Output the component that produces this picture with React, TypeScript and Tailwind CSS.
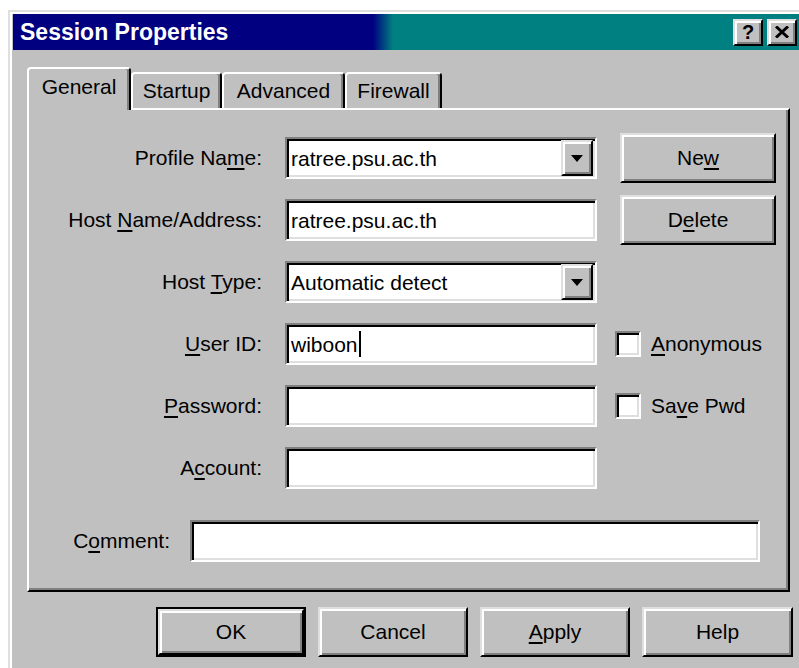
import React from 'react';

// Win9x-style "Session Properties" dialog, drawn at roughly 2x scale.

const raised =
  'border-2 border-t-[#dfdfdf] border-l-[#dfdfdf] border-r-black border-b-black shadow-[inset_2px_2px_0_#fff,inset_-2px_-2px_0_#808080]';
const sunken =
  'border-2 border-t-[#808080] border-l-[#808080] border-r-white border-b-white shadow-[inset_2px_2px_0_#000,inset_-2px_-2px_0_#dfdfdf]';

const Mn = ({ text, at }: { text: string; at: number }) => (
  <>
    {text.slice(0, at)}
    <span className="underline underline-offset-[3px] decoration-[1.5px]">{text[at]}</span>
    {text.slice(at + 1)}
  </>
);

const DropButton = () => (
  <div className={`${raised} bg-[#c0c0c0] w-[32px] h-[36px] flex items-center justify-center shrink-0`}>
    <svg width="12" height="7" viewBox="0 0 12 7">
      <path d="M0 0h12L6 7z" fill="#000" />
    </svg>
  </div>
);

const Field = ({
  value,
  caret,
  dropdown,
  className = 'w-[312px]',
}: {
  value?: string;
  caret?: boolean;
  dropdown?: boolean;
  className?: string;
}) => (
  <div className={`${sunken} ${className} h-[42px] bg-white flex items-center pl-[4px] pr-[2px] shrink-0`}>
    <span className="flex-1 whitespace-nowrap leading-none flex items-center">
      {value}
      {caret && <span className="inline-block w-[2px] h-[26px] bg-black ml-[1px]" />}
    </span>
    {dropdown && <DropButton />}
  </div>
);

const Button = ({ children, className = '' }: { children: React.ReactNode; className?: string }) => (
  <button className={`${raised} bg-[#c0c0c0] flex items-center justify-center text-black ${className}`}>
    {children}
  </button>
);

const Check = ({ children }: { children: React.ReactNode }) => (
  <div className="flex items-center gap-[10px]">
    <div className={`${sunken} w-[26px] h-[26px] bg-white`} />
    <span>{children}</span>
  </div>
);

const Row = ({
  label,
  children,
  side,
}: {
  label: React.ReactNode;
  children: React.ReactNode;
  side?: React.ReactNode;
}) => (
  <div className="flex items-center h-[42px]">
    <div className="w-[234px] text-right pr-[1px]">{label}</div>
    <div className="ml-[22px]">{children}</div>
    {side && <div className="ml-[18px]">{side}</div>}
  </div>
);

const Tab = ({ label, active, className }: { label: string; active?: boolean; className: string }) => (
  <div
    className={`border-t-2 border-l-2 border-white border-r-2 border-r-black shadow-[inset_-2px_0_0_#808080] rounded-t-[4px] bg-[#c0c0c0] flex items-center justify-center ${className} ${
      active ? 'h-[43px] -mb-[2px] z-10 relative pb-[6px]' : 'h-[36px]'
    }`}
  >
    {label}
  </div>
);

export default function App() {
  return (
    <div
      className="w-[799px] h-[668px] overflow-hidden bg-white pt-[10px] text-[21px] text-black"
      style={{ fontFamily: '"Liberation Sans", Arial, sans-serif' }}
    >
      <div className="ml-[8px] w-[793px] h-[700px] border-t-2 border-l-2 border-[#dfdfdf] bg-[#c0c0c0]">
        <div className="border-t-2 border-l-2 border-white h-full pl-[1px]">
          {/* title bar */}
          <div className="h-[36px] flex items-center bg-[linear-gradient(90deg,#000080_0px,#000080_360px,#008080_380px,#008080_100%)] pr-[4px]">
            <span className="flex-1 pl-[7px] text-white font-bold text-[23px] leading-none">Session Properties</span>
            <div className="flex gap-[4px]">
              <div className={`${raised} bg-[#c0c0c0] w-[30px] h-[27px] flex items-center justify-center font-bold text-[20px] leading-none`}>
                ?
              </div>
              <div className={`${raised} bg-[#c0c0c0] w-[30px] h-[27px] flex items-center justify-center`}>
                <svg width="14" height="12" viewBox="0 0 14 12">
                  <path d="M1 0.5L13 11.5M13 0.5L1 11.5" stroke="#000" strokeWidth="3" />
                </svg>
              </div>
            </div>
          </div>

          {/* tabs + page */}
          <div className="ml-[14px] mt-[17px] w-[763px]">
            <div className="flex items-end h-[41px]">
              <Tab label="General" active className="w-[104px]" />
              <Tab label="Startup" className="w-[91px]" />
              <Tab label="Advanced" className="w-[123px]" />
              <Tab label="Firewall" className="w-[97px]" />
            </div>
            <div className="h-[484px] border-t-2 border-l-2 border-white border-r-2 border-b-2 border-r-black border-b-black shadow-[inset_-2px_-2px_0_#808080] pt-[27px]">
              <div className="flex flex-col gap-[20px]">
                <Row
                  label={<Mn text="Profile Name:" at={10} />}
                  side={
                    <Button className="w-[156px] h-[50px] ml-[5px]">
                      <Mn text="New" at={2} />
                    </Button>
                  }
                >
                  <Field value="ratree.psu.ac.th" dropdown />
                </Row>
                <Row
                  label={<Mn text="Host Name/Address:" at={5} />}
                  side={
                    <Button className="w-[156px] h-[50px] ml-[5px]">
                      <Mn text="Delete" at={1} />
                    </Button>
                  }
                >
                  <Field value="ratree.psu.ac.th" />
                </Row>
                <Row label={<Mn text="Host Type:" at={5} />}>
                  <Field value="Automatic detect" dropdown />
                </Row>
                <Row label={<Mn text="User ID:" at={0} />} side={<Check><Mn text="Anonymous" at={0} /></Check>}>
                  <Field value="wiboon" caret />
                </Row>
                <Row label={<Mn text="Password:" at={0} />} side={<Check><Mn text="Save Pwd" at={2} /></Check>}>
                  <Field />
                </Row>
                <Row label={<Mn text="Account:" at={1} />}>
                  <Field />
                </Row>
              </div>
              <div className="flex items-center h-[43px] mt-[30px]">
                <div className="w-[141px] text-right">
                  <Mn text="Comment:" at={1} />
                </div>
                <Field className="w-[570px] ml-[20px]" />
              </div>
            </div>
          </div>

          {/* dialog buttons */}
          <div className="flex gap-[12px] mt-[15px] ml-[143px]">
            <div className="border-2 border-black">
              <Button className="w-[146px] h-[46px]">OK</Button>
            </div>
            <Button className="w-[150px] h-[50px]">Cancel</Button>
            <Button className="w-[150px] h-[50px]">
              <Mn text="Apply" at={0} />
            </Button>
            <Button className="w-[151px] h-[50px]">Help</Button>
          </div>
        </div>
      </div>
    </div>
  );
}
